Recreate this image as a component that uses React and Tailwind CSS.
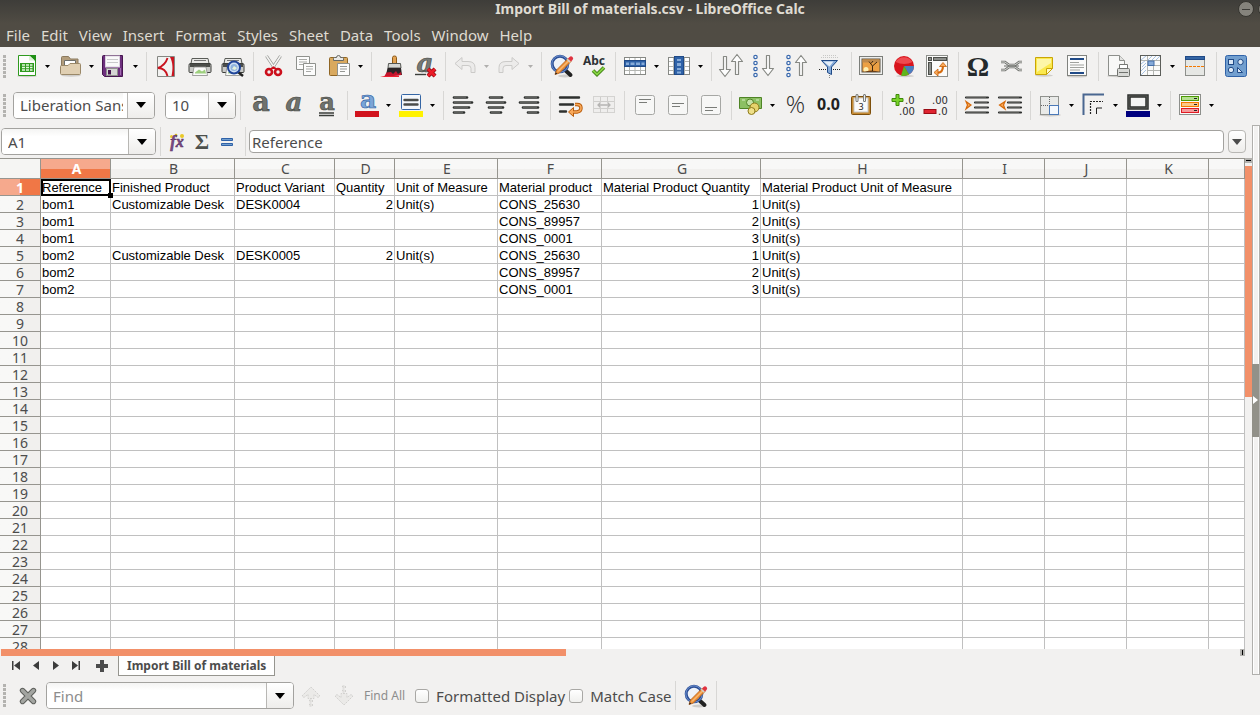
import { useState } from "react";

const MENUS = [
  "File", "Edit", "View", "Insert", "Format", "Styles",
  "Sheet", "Data", "Tools", "Window", "Help",
];

const COLUMNS = [
  { id: "A", width: "w-[70px]" },
  { id: "B", width: "w-[124px]" },
  { id: "C", width: "w-[100px]" },
  { id: "D", width: "w-[60px]" },
  { id: "E", width: "w-[103px]" },
  { id: "F", width: "w-[104px]" },
  { id: "G", width: "w-[159px]" },
  { id: "H", width: "w-[202px]" },
  { id: "I", width: "w-[82px]" },
  { id: "J", width: "w-[82px]" },
  { id: "K", width: "w-[82px]" },
  { id: "", width: "" },
];

const DATA = [
  ["Reference", "Finished Product", "Product Variant", "Quantity", "Unit of Measure", "Material product", "Material Product Quantity", "Material Product Unit of Measure"],
  ["bom1", "Customizable Desk", "DESK0004", 2, "Unit(s)", "CONS_25630", 1, "Unit(s)"],
  ["bom1", "", "", "", "", "CONS_89957", 2, "Unit(s)"],
  ["bom1", "", "", "", "", "CONS_0001", 3, "Unit(s)"],
  ["bom2", "Customizable Desk", "DESK0005", 2, "Unit(s)", "CONS_25630", 1, "Unit(s)"],
  ["bom2", "", "", "", "", "CONS_89957", 2, "Unit(s)"],
  ["bom2", "", "", "", "", "CONS_0001", 3, "Unit(s)"],
];

const ROW_COUNT = 28;

/* ---------- icon drawings, all on a 24x24 box ---------- */

const Lens = () => (
  <>
    <ellipse cx="15" cy="22" rx="7" ry="1.500" fill="#cfcdca" />
    <path d="M15 16l5.500 5" stroke="#222" strokeWidth="4" strokeLinecap="round" />
    <circle cx="10" cy="10" r="7.800" fill="#eef2f8" stroke="#2c4f96" strokeWidth="3" />
    <circle cx="10" cy="10" r="8.200" fill="none" stroke="#6f92d0" strokeWidth="1" />
    <path d="M5 20.500l1.500-4.500L18 4.500l3 3L9.500 19z" fill="#f0933a" stroke="#b35a10" strokeWidth=".8" />
    <path d="M8 17.500L19.500 6" stroke="#fcd39b" strokeWidth="1" />
    <path d="M18 4.500L19.500 3a2 2 0 013 3L21 7.500z" fill="#e0323f" />
    <path d="M17.200 5.300l3 3" stroke="#d0d0d0" strokeWidth="1.400" />
    <path d="M5 20.500l.8-2.300 1.500 1.500z" fill="#222" />
  </>
);

const Printer = () => (
  <>
    <path d="M4 4.500h16l1 5H3z" fill="#e9e9e7" stroke="#5a5c58" />
    <path d="M6 6.500h12" stroke="#777" />
    <path d="M2 9.500q-1 0-1 2v6q0 1 1 1h20q1 0 1-1v-6q0-2-1-2z" fill="#c9cac7" stroke="#3c3e3b" />
    <rect x="2" y="10" width="20" height="3" fill="#4b4d4a" />
    <path d="M6 13h12l1.500 8.500h-15z" fill="#fafafa" stroke="#8a8c88" strokeWidth=".8" />
    <path d="M7 18.500l4-3 3 2 3-2 1 4H7z" fill="#9ed07e" />
  </>
);

const Letter = ({ italic, size = 27, y = 18, color = "#6f726d", edge = "#434642", children }) => (
  <>
    <text
      x="12" y={y} textAnchor="middle" fontSize={size} fontWeight="bold"
      fontStyle={italic ? "italic" : "normal"} fontFamily="DejaVu Serif, serif"
      fill={color} stroke={edge} strokeWidth=".6"
    >
      a
    </text>
    {children}
  </>
);

const Bars = ({ rows }) => rows.map(([x1, x2], i) => (
  <g key={i}>
    <path d={`M${x1} ${4.5 + i * 5}H${x2}`} stroke="#2e302e" strokeWidth="2.600" strokeLinecap="round" />
    <path d={`M${x1} ${4.2 + i * 5}H${x2 - 1}`} stroke="#858783" strokeWidth=".8" />
  </g>
));

const TableIcon = ({ vertical }) => (
  <>
    <rect x="0.500" y="3.500" width="21" height="17" fill="#fff" stroke="#868884" />
    <path d="M5.500 4v16M11 4v16M16.500 4v16M1 7.500h20M1 12.500h20M1 16.500h20" stroke="#b4b6b2" />
    {vertical ? (
      <>
        <rect x="6.500" y="2.500" width="9" height="18" fill="#2f62a8" stroke="#204a87" />
        <path d="M9 5h4v2H9zM9 9h4v3H9zM9 14h4v2H9zM9 17.500h4v2H9z" fill="#86abd9" />
      </>
    ) : (
      <>
        <rect x="0.500" y="6.500" width="21" height="6" fill="#2f62a8" stroke="#204a87" />
        <path d="M2 8.500h3v2.500H2zM6.500 8.500h4v2.500h-4zM12 8.500h4v2.500h-4zM17.500 8.500h3v2.500h-3z" fill="#86abd9" />
      </>
    )}
  </>
);

const ArrowV = ({ x, up, y = 1 }) => (
  <path
    d="M4.500 .5h3v13h4L6 20.500.500 13.500h4z"
    transform={up ? `translate(${x} ${y + 21}) scale(1 -1)` : `translate(${x} ${y})`}
    fill="#fdfdfd" stroke="#878984" strokeWidth="1.200" strokeLinejoin="round"
  />
);

const Dots = () => [3, 9, 15, 21].map((y) => (
  <circle key={y} cx="2.500" cy={y} r="1.700" fill="#fff" stroke="#3a69ad" strokeWidth="1.200" />
));

const VAlign = ({ y }) => (
  <>
    <rect x="2.500" y="2.500" width="19" height="19" rx="2" fill="#f7f7f6" stroke="#a6a7a4" />
    <path d={`M6 ${y}h12M6 ${y + 3}h8`} stroke="#7b7d79" strokeWidth="1.200" />
  </>
);

const Num = ({ x, y, children }) => (
  <text x={x} y={y} fontSize="10" fontFamily="DejaVu Sans, sans-serif" fill="#2c2c2c">{children}</text>
);

const Indent = ({ children }) => (
  <>
    <path d="M1 4.500h22M10 9.500h13M10 14.500h13M1 19.500h22" stroke="#2e302e" strokeWidth="2.200" strokeLinecap="round" />
    <path d="M1 4.200h20M10 9.200h12M10 14.200h12M1 19.200h20" stroke="#858783" strokeWidth=".7" />
    {children}
  </>
);

const ICONS = {
  newDoc: (
    <>
      <ellipse cx="12" cy="22" rx="10" ry="1.200" fill="#cfcdca" />
      <path d="M3.500 1.500h12l5 5v15h-17z" fill="#fdfdfd" stroke="#2f9a1f" />
      <path d="M14 1h7v7z" fill="#1f8f14" />
      <path d="M14 1.500v5h6z" fill="#d9f0d2" />
      <rect x="5" y="9" width="14" height="9" fill="#2f9a1f" />
      <path d="M7 11h3M11 11h3M15 11h2.500M7 13.500h3M11 13.500h3M15 13.500h2.500M7 16h3M11 16h3M15 16h2.500" stroke="#e4f7de" strokeWidth="1.400" />
    </>
  ),
  open: (
    <>
      <ellipse cx="12" cy="21.500" rx="10" ry="1.200" fill="#cfcdca" />
      <path d="M2.500 20V3.500q0-1 1-1h6l2 2.500h7.500v6" fill="#b39d7c" stroke="#8b7a5e" />
      <path d="M5.500 11V6.500h11V11" fill="#fff" stroke="#6c6e6a" />
      <path d="M1.500 12.500q0-1 1-1H9l2-2h9.500q1 0 1 1v9q0 1-1 1h-18q-1 0-1-1z" fill="#e0cfb2" stroke="#9a8868" />
    </>
  ),
  save: (
    <>
      <path d="M-.5 2.500q0-1 1-1h19v21h-18l-2-2z" fill="#6d2f7d" stroke="#46154f" />
      <rect x="2.500" y="2" width="14" height="11" fill="#fafafa" stroke="#d9d0dd" />
      <path d="M4 5.500h11M4 8.500h11" stroke="#c9c9cb" />
      <rect x="3.500" y="14.500" width="11" height="7" fill="#d6d6d4" stroke="#8e8f8c" />
      <rect x="5" y="16" width="3" height="4.500" fill="#46154f" />
      <path d="M17.500 14v7" stroke="#a36bb1" />
    </>
  ),
  pdf: (
    <>
      <path d="M2.500 2.500h17v20h-17z" fill="#f2f2f1" stroke="#858682" />
      <path d="M15 3h4v19h-2.500C18 15 18 9 15 3z" fill="#c9141f" />
      <path d="M12.500 4C11 9 8 12 3 14c5 0 8 2 9.500 8" fill="none" stroke="#c9141f" strokeWidth="1.900" />
    </>
  ),
  print: <Printer />,
  preview: (
    <>
      <Printer />
      <path d="M17 18l5 4" stroke="#222" strokeWidth="2.500" />
      <circle cx="13" cy="13.500" r="6" fill="#cfe0f3" stroke="#20459a" strokeWidth="2" />
      <circle cx="13" cy="13.500" r="3.500" fill="#8fb3df" />
      <path d="M11 15l2-3 3 2-2 2z" fill="#e5f2dc" />
    </>
  ),
  cut: (
    <>
      <path d="M4.500 2l8 12M18.500 2l-8 12" stroke="#8c8e8a" strokeWidth="3" />
      <path d="M4.500 2l8 12M18.500 2l-8 12" stroke="#f4f4f3" strokeWidth="1.600" />
      <ellipse cx="7" cy="18" rx="3" ry="3" fill="none" stroke="#cc0f1c" strokeWidth="2.600" />
      <ellipse cx="16" cy="18" rx="3" ry="3" fill="none" stroke="#cc0f1c" strokeWidth="2.600" />
      <path d="M9 15l2.500-1.500L14 15" fill="none" stroke="#cc0f1c" strokeWidth="2" />
    </>
  ),
  copy: (
    <>
      <path d="M1.500 2.500h13v13h-13z" fill="#fcfcfc" stroke="#8f918d" />
      <path d="M4 5.500h8M4 8h8M4 10.500h5" stroke="#a9aaa7" />
      <path d="M8.500 9.500h12v12h-12z" fill="#fcfcfc" stroke="#8f918d" />
      <path d="M11 12.500h7M11 15h7M11 17.500h5" stroke="#a9aaa7" />
    </>
  ),
  paste: (
    <>
      <rect x="1.500" y="3.500" width="18" height="18" rx="1" fill="#d9a95f" stroke="#8f6524" />
      <path d="M5.500 6.500v-2q0-1 1-1h2q0-2 2-2t2 2h2q1 0 1 1v2z" fill="#e8e8e6" stroke="#666864" />
      <path d="M9.500 9.500h12v12h-12z" fill="#fcfcfc" stroke="#8f918d" />
      <path d="M12 12.500h7M12 15h7M12 17.500h5" stroke="#969894" />
    </>
  ),
  brush: (
    <>
      <path d="M0 23q7-2.500 19-1.500V23z" fill="#ef2030" />
      <path d="M12.500 10V3.500q0-1.500 2-1.500t2 1.500V10z" fill="#e2a354" stroke="#8f5a15" />
      <path d="M8.500 9.500h12l.5 4.500H8z" fill="#d5d6d3" stroke="#555753" />
      <path d="M7.500 14h13.500l1 7H6z" fill="#2a2426" />
      <path d="M6.500 18.500l-2 3.500h9l8-1-.5-3-3 2-2-3-3 3-2-2z" fill="#c4142c" />
    </>
  ),
  clearFmt: (
    <>
      <Letter italic size={26} y={18} color="#777975" />
      <path d="M2 20.500h11" stroke="#3b3e3a" strokeWidth="1.400" />
      <path d="M15 15l7 7M22 15l-7 7" stroke="#8f0b13" strokeWidth="4.200" />
      <path d="M15 15l7 7M22 15l-7 7" stroke="#ec1c28" strokeWidth="2.600" />
    </>
  ),
  undo: (
    <path d="M1 9.500l7-6v4h6q7 0 7 6v5h-4v-4q0-3-3-3H8v4z" fill="#ecebea" stroke="#cbcac8" strokeLinejoin="round" />
  ),
  redo: (
    <path d="M21 9.500l-7-6v4H8q-7 0-7 6v5h4v-4q0-3 3-3h6v4z" fill="#ecebea" stroke="#cbcac8" strokeLinejoin="round" />
  ),
  find: <Lens />,
  spell: (
    <>
      <text x="11" y="11" textAnchor="middle" fontSize="12" fontWeight="bold" fontFamily="Noto Sans, sans-serif" fill="#2d3136">Abc</text>
      <path d="M10 16.500l4 4 7-7" fill="none" stroke="#3b7d10" strokeWidth="3.600" />
      <path d="M10 16.500l4 4 7-7" fill="none" stroke="#86d243" strokeWidth="1.800" />
    </>
  ),
  row: <TableIcon />,
  col: <TableIcon vertical />,
  sort: (
    <>
      <ArrowV x={-1} y={2} />
      <ArrowV x={11} y={0} up />
    </>
  ),
  sortAsc: (
    <>
      <Dots />
      <ArrowV x={9} />
    </>
  ),
  sortDesc: (
    <>
      <Dots />
      <ArrowV x={9} up />
    </>
  ),
  filter: (
    <>
      <path d="M4 1.500h14M2 3.500h18" stroke="#c8c8c6" strokeDasharray="1 1" />
      <path d="M0 15.500h22" stroke="#222" strokeDasharray="1 1" />
      <path d="M2.500 6.500h16l-6 6.500v7.500l-4-2V13z" fill="#86abd9" stroke="#204a87" />
      <path d="M4.500 7.500h10l-4 5z" fill="#e4edf7" />
      <path d="M10.500 21v3" stroke="#888" strokeDasharray="1 1" />
    </>
  ),
  image: (
    <>
      <rect x="-.5" y="2.500" width="23" height="18" fill="#eeeeec" stroke="#7c7e7a" />
      <rect x="2" y="5" width="18" height="13" fill="#eca044" stroke="#5c5446" />
      <rect x="2.500" y="5.500" width="17" height="3" fill="#c08a4c" />
      <circle cx="6" cy="15.500" r="2.500" fill="#ffeeb0" />
      <path d="M3 18q9-3 16 0z" fill="#6b4018" />
      <path d="M12.500 17v-5L9 7.500M12.500 12L17 8M11 9.500l2-2.500" fill="none" stroke="#3f2810" strokeWidth="1" />
    </>
  ),
  chart: (
    <>
      <ellipse cx="12" cy="22" rx="9" ry="1.200" fill="#cfcdca" />
      <circle cx="11" cy="12" r="10" fill="#d8141c" />
      <path d="M2.500 8a10 10 0 0117 0q-8 4-17 0z" fill="#ee4a50" />
      <path d="M11 12h10a10 10 0 01-5 8.600z" fill="#4a7ebf" />
      <path d="M11 12l5 8.600a10 10 0 01-8 .8z" fill="#5fb41c" />
    </>
  ),
  pivot: (
    <>
      <rect x=".5" y="1.500" width="21" height="21" fill="#fbfbfa" stroke="#8d8f8b" />
      <rect x="2.500" y="3.500" width="3" height="3" fill="#8d8f8b" stroke="#4c4e4a" />
      <rect x="7.500" y="3.500" width="13" height="3" fill="#8d8f8b" stroke="#4c4e4a" />
      <rect x="2.500" y="8.500" width="3" height="12" fill="#8d8f8b" stroke="#4c4e4a" />
      <path d="M11 18.500q6 1 6-7" fill="none" stroke="#d66a0b" strokeWidth="2.200" />
      <path d="M13.500 12.500L17 8.500l3.500 4zM12 15l-4 3.500 4 3.500z" fill="#f9a95a" stroke="#c4600a" strokeWidth=".8" />
    </>
  ),
  omega: (
    <text x="11" y="22" textAnchor="middle" fontSize="28" fontWeight="bold" fontFamily="Liberation Serif, serif" fill="#24292b">Ω</text>
  ),
  link: (
    <>
      <path d="M1 8h4l4 3h6l4-3h3M1 16h4l4-3h6l4 3h3" fill="none" stroke="#6c6e6a" strokeWidth="2.600" />
      <path d="M1 8h4l4 3h6l4-3h3M1 16h4l4-3h6l4 3h3" fill="none" stroke="#dcddda" strokeWidth="1" />
      <path d="M4 12h15" stroke="#6c6e6a" />
    </>
  ),
  note: (
    <>
      <ellipse cx="11" cy="21.500" rx="9" ry="1.200" fill="#cfcdca" />
      <path d="M2.500 3.500h17v11l-6 6h-11z" fill="#fbe94e" stroke="#c9a506" />
      <path d="M4 5h14v4L4 18z" fill="#fdf6a8" />
      <path d="M13.500 20.500v-6h6z" fill="#fff9c4" stroke="#c9a506" />
    </>
  ),
  header: (
    <>
      <ellipse cx="11" cy="22.500" rx="10" ry="1" fill="#cfcdca" />
      <rect x="1.500" y="1.500" width="19" height="20" fill="#fbfbfa" stroke="#80827e" />
      <path d="M4 5h14M4 19h14" stroke="#204a87" strokeWidth="2" />
      <path d="M4 8.500h9M4 11h14M4 13.500h14M4 16h10" stroke="#a0a29e" />
    </>
  ),
  printArea: (
    <>
      <ellipse cx="10" cy="22" rx="10" ry="1.200" fill="#cfcdca" />
      <path d="M1.500 1.500h11l5 5v15h-16z" fill="#f8f8f7" stroke="#8d8f8b" />
      <path d="M12.500 1.500v5h5" fill="#e2e2e0" stroke="#8d8f8b" />
      <path d="M12.500 15v-4.500h8V15" fill="#fff" stroke="#767874" />
      <rect x="10.500" y="14.500" width="12" height="8" rx="1" fill="#d8d9d6" stroke="#70726e" />
      <path d="M12 18.500h9" stroke="#70726e" />
    </>
  ),
  freeze: (
    <>
      <rect x=".5" y="1.500" width="20" height="20" fill="#fbfbfa" stroke="#5c5e5a" />
      <path d="M1 6l5-4M1 10l5-4M2 13l4-4M1 17l5-5M1 21l5-5M8 6l4-4M12 6l4-4M16 6l4-4" stroke="#a9c3e4" />
      <path d="M7.500 2v19M13.500 6v15M1 6.500h19M7 11.500h13M7 16.500h13" stroke="#b3b5b1" />
      <rect x="8" y="7" width="6" height="4.500" fill="#86abd9" stroke="#456fa8" />
    </>
  ),
  split: (
    <>
      <rect x="1.500" y="2.500" width="19" height="19" fill="#e6e7e4" stroke="#8d8f8b" />
      <rect x="1.500" y="2.500" width="19" height="3" fill="#3465a4" stroke="#204a87" />
      <path d="M1 12.500h20" stroke="#f57900" strokeWidth="1.200" strokeDasharray="3 1" />
    </>
  ),
  shapes: (
    <>
      <rect x=".5" y="1.500" width="21" height="21" rx="2" fill="#729fcf" stroke="#2f62a8" />
      <g fill="#dbe8f6" stroke="#204a87">
        <rect x="3.500" y="5.500" width="5" height="5" />
        <circle cx="15.500" cy="8" r="2.700" />
        <circle cx="6" cy="16" r="2.700" />
        <path d="M12.500 13.500v5h5z" />
      </g>
    </>
  ),
  bold: <Letter />,
  italic: <Letter italic size={26} />,
  underline: (
    <Letter size={24} y={17}>
      <path d="M4 20h15M4 22.500h15" stroke="#3b3e3a" strokeWidth="1.300" />
    </Letter>
  ),
  fontColor: (
    <>
      <Letter size={25} y={15} color="#7ba5d8" edge="#2a5a9e" />
      <rect x="-1" y="18" width="24" height="6" fill="#d1131d" />
    </>
  ),
  highlight: (
    <>
      <rect x="1.500" y="1.500" width="19" height="15" rx="1" fill="#f4f7fb" stroke="#3465a4" />
      <path d="M4.500 7h13M4.500 11.500h13" stroke="#4a4c49" strokeWidth="2.400" strokeLinecap="round" />
      <rect x="-1" y="18" width="24" height="6" fill="#fff200" />
    </>
  ),
  left: <Bars rows={[[2, 15], [2, 20], [2, 17], [2, 12]]} />,
  center: <Bars rows={[[5, 17], [2, 20], [4, 18], [6, 16]]} />,
  right: <Bars rows={[[7, 20], [2, 20], [5, 20], [10, 20]]} />,
  wrap: (
    <>
      <path d="M1 4.500h19M1 11.500h13M1 18.500h6" stroke="#2e302e" strokeWidth="2.400" strokeLinecap="round" />
      <path d="M16 11.500h2q4 0 4 3.500t-4 4h-5" fill="none" stroke="#b85a08" strokeWidth="3.400" />
      <path d="M14.500 14.500L9.500 19l5 4.500z" fill="#f9a95a" stroke="#b85a08" />
      <path d="M16 11.500h2q4 0 4 3.500t-4 4h-5" fill="none" stroke="#f9a95a" strokeWidth="1.600" />
    </>
  ),
  merge: (
    <>
      <rect x="1.500" y="3.500" width="21" height="16" fill="#efeeed" stroke="#d4d3d1" />
      <path d="M8.500 4v4M15.500 4v4M2 8.500h20M2 15.500h20M8.500 16v4M15.500 16v4" stroke="#cfcecc" />
      <path d="M6 12h12M8.500 9.500L6 12l2.500 2.500M15.500 9.500L18 12l-2.500 2.500" fill="none" stroke="#b5b4b2" strokeWidth="1.300" />
    </>
  ),
  top: <VAlign y={6.5} />,
  middle: <VAlign y={10.5} />,
  bottom: <VAlign y={14.5} />,
  currency: (
    <>
      <path d="M-.5 4.500h22v11h-22z" fill="#8cc063" stroke="#4f8426" />
      <circle cx="10" cy="9.500" r="3.500" fill="#c4e3a7" stroke="#4f8426" />
      <path d="M2 7h3M16 7h3" stroke="#d9efc6" />
      <circle cx="14.500" cy="14.500" r="4.500" fill="#e6d36c" stroke="#8d7a1a" />
      <circle cx="11.500" cy="18" r="3.500" fill="#efe08a" stroke="#8d7a1a" />
    </>
  ),
  percent: (
    <text x="11.500" y="20" textAnchor="middle" fontSize="24" fontFamily="Open Sans, sans-serif" fontWeight="300" fill="#2c2c2c">%</text>
  ),
  number: (
    <text x="11.500" y="17" textAnchor="middle" fontSize="16" fontWeight="bold" fontFamily="Noto Sans, sans-serif" fill="#1f1f1f">0.0</text>
  ),
  date: (
    <>
      <rect x="1.500" y="3.500" width="19" height="18" rx="1" fill="#c58a33" stroke="#7d4f0c" />
      <rect x="4" y="5" width="14" height="14" fill="#fafafa" stroke="#c9c9c7" />
      <path d="M7 2.500v5M14.500 2.500v5" stroke="#6f716d" strokeWidth="3" strokeLinecap="round" />
      <path d="M7 2.500v5M14.500 2.500v5" stroke="#f0f0ee" strokeWidth="1.200" strokeLinecap="round" />
      <text x="11" y="17" textAnchor="middle" fontSize="9" fontFamily="Noto Sans, sans-serif" fill="#222">3</text>
    </>
  ),
  addDec: (
    <>
      <path d="M5 1.500h3v4h4v3H8v4H5v-4H1v-3h4z" fill="#79d32b" stroke="#3f8a08" />
      <Num x={14} y={11}>.0</Num>
      <Num x={8} y={22}>.00</Num>
    </>
  ),
  delDec: (
    <>
      <rect x="0" y="16.500" width="12" height="4" fill="#e02430" stroke="#9a0c14" />
      <Num x={8} y={11}>.00</Num>
      <Num x={14} y={22}>.0</Num>
    </>
  ),
  indent: (
    <Indent>
      <path d="M1 8.500l5 3.500-5 4 1.500-4z" fill="#f9a95a" stroke="#d66a0b" strokeWidth="1.200" />
    </Indent>
  ),
  outdent: (
    <Indent>
      <path d="M7 8.500L1.500 12 7 16l-1.500-4z" fill="#f9a95a" stroke="#d66a0b" strokeWidth="1.200" />
    </Indent>
  ),
  borders: (
    <>
      <ellipse cx="11" cy="22" rx="11" ry="1.500" fill="#cfcdca" />
      <rect x="1.500" y="3.500" width="18" height="18" fill="#e9eae8" stroke="#90928e" />
      <path d="M10.500 4v8M2 12.500h8" stroke="#666" strokeDasharray="1 1" />
      <rect x="10.500" y="12.500" width="9" height="9" fill="#f4f8fd" stroke="#4a78b8" />
    </>
  ),
  borderStyle: (
    <>
      <path d="M.5 22V1.500H21" fill="none" stroke="#2d4f80" strokeWidth="2" opacity=".85" />
      <path d="M7.500 21V8.500H20" fill="none" stroke="#222" strokeWidth="1.200" strokeDasharray="2 1" />
      <path d="M13.500 21v-6H19" fill="none" stroke="#222" />
    </>
  ),
  borderColor: (
    <>
      <rect x="2" y="3" width="18" height="12" fill="#f4f4f3" stroke="#2a2c2a" strokeWidth="3.500" />
      <rect x="2" y="3" width="18" height="12" fill="none" stroke="#5c5e5a" strokeWidth="1" />
      <rect x="-1" y="18" width="24" height="6" fill="#00007f" />
    </>
  ),
  conditional: (
    <>
      <rect x=".5" y="1.500" width="21" height="20" fill="#fafafa" stroke="#8d8f8b" />
      <rect x="2.500" y="3.500" width="17" height="4" fill="#b4e08f" stroke="#4e9a06" />
      <rect x="2.500" y="9.500" width="17" height="4" fill="#fcc98a" stroke="#f57900" />
      <rect x="2.500" y="15.500" width="17" height="4" fill="#f59a9a" stroke="#e01b24" />
      <path d="M15 5.500h3M15 11.500h3M15 17.500h3" stroke="#222" strokeWidth="1.200" />
    </>
  ),
  fx: (
    <>
      <g fill="#e9c826">
        <circle cx="6.500" cy="6.500" r="1.500" />
        <circle cx="11" cy="5" r="1.300" />
        <circle cx="17" cy="6" r="2" />
      </g>
      <text x="12" y="17" textAnchor="middle" fontSize="16" fontWeight="bold" fontStyle="italic" fontFamily="Liberation Serif, serif" fill="#7b4b86" stroke="#57305f" strokeWidth=".5">fx</text>
    </>
  ),
  sum: (
    <text x="12" y="19" textAnchor="middle" fontSize="22" fontWeight="bold" fontFamily="Liberation Serif, serif" fill="#4d504c">Σ</text>
  ),
  equals: (
    <path d="M6.500 8.500h11v2h-11zM6.500 13.500h11v2h-11z" fill="#729fcf" stroke="#2f62a8" />
  ),
  close: (
    <>
      <path d="M6.500 6.500l11 11M17.500 6.500l-11 11" stroke="#5c5e5a" strokeWidth="5.400" strokeLinecap="round" />
      <path d="M6.500 6.500l11 11M17.500 6.500l-11 11" stroke="#a3a5a1" strokeWidth="3.400" strokeLinecap="round" />
    </>
  ),
  prev: (
    <path d="M3 12l9-9 9 9-2 1.500-4-3v4H9v-4l-4 3zM10.500 16h3v2h-3zM10.500 20h3v2h-3z" fill="#ebeae8" stroke="#d2d1cf" strokeDasharray="2 1" />
  ),
  next: (
    <path d="M3 12l9 9 9-9-2-1.500-4 3v-4H9v4l-4-3zM10.500 6h3v2h-3zM10.500 2h3v2h-3z" fill="#ebeae8" stroke="#d2d1cf" strokeDasharray="2 1" />
  ),
};

const Icon = ({ name }) => (
  <svg viewBox="0 0 24 24" fill="none" className="w-6 h-6 shrink-0 overflow-visible" aria-hidden="true">
    {ICONS[name]}
  </svg>
);

const Caret = ({ small = false, className = "text-black" }) => (
  <svg
    viewBox="0 0 10 6"
    className={`${small ? "w-[5px] h-[3px]" : "w-[10px] h-1.5"} ${className}`}
    aria-hidden="true"
  >
    <path d="M0 0h10L5 6z" fill="currentColor" />
  </svg>
);

/* ---------- toolbars ---------- */

const FILE_TOOLS = [
  ["newDoc", "New", "menu"], ["open", "Open", "menu"], ["save", "Save", "menu"], null,
  ["pdf", "Export as PDF"], ["print", "Print"], ["preview", "Print Preview"], null,
  ["cut", "Cut"], ["copy", "Copy"], ["paste", "Paste", "menu"], null,
  ["brush", "Clone Formatting"], ["clearFmt", "Clear Formatting"], null,
  ["undo", "Undo", "off"], ["redo", "Redo", "off"], null,
  ["find", "Find & Replace"], ["spell", "Spelling"], null,
  ["row", "Row", "menu"], ["col", "Column", "menu"], null,
  ["sort", "Sort"], ["sortAsc", "Sort Ascending"], ["sortDesc", "Sort Descending"], ["filter", "AutoFilter"], null,
  ["image", "Insert Image"], ["chart", "Insert Chart"], ["pivot", "Pivot Table"], null,
  ["omega", "Special Character"], ["link", "Hyperlink"], ["note", "Comment"], ["header", "Headers and Footers"], null,
  ["printArea", "Define Print Area"], ["freeze", "Freeze Rows and Columns", "menu"], ["split", "Split Window"], null,
  ["shapes", "Show Draw Functions"],
];

const FORMAT_TOOLS = [
  null,
  ["bold", "Bold"], ["italic", "Italic"], ["underline", "Underline"], null,
  ["fontColor", "Font Color", "menu"], ["highlight", "Highlighting", "menu"], null,
  ["left", "Align Left"], ["center", "Center"], ["right", "Align Right"], null,
  ["wrap", "Wrap Text"], ["merge", "Merge Cells"], null,
  ["top", "Align Top"], ["middle", "Center Vertically"], ["bottom", "Align Bottom"], null,
  ["currency", "Currency", "menu"], ["percent", "Percent"], ["number", "Number"], ["date", "Date"], null,
  ["addDec", "Add Decimal Place"], ["delDec", "Delete Decimal Place"], null,
  ["indent", "Increase Indent"], ["outdent", "Decrease Indent"], null,
  ["borders", "Borders", "menu"], ["borderStyle", "Border Style", "menu"], ["borderColor", "Border Color", "menu"], null,
  ["conditional", "Conditional Formatting", "menu"],
];

const Separator = () => (
  <div className="w-2 shrink-0 flex justify-center">
    <div className="w-px h-[29px] bg-[#d8d7d5]" />
  </div>
);

const Grip = () => (
  <div className="w-[10px] shrink-0 pl-[3px] flex flex-col gap-px">
    {[0, 1, 2, 3, 4, 5].map((i) => (
      <span key={i} className="w-[3px] h-[3px] bg-[#b4b3b0]" />
    ))}
  </div>
);

const Tools = ({ items }) => items.map((item, i) => {
  if (!item) return <Separator key={i} />;
  const [name, label, kind] = item;
  return (
    <div key={name} className="flex items-center shrink-0">
      <button type="button" aria-label={label} disabled={kind === "off"} className="w-[33px] h-8 pl-[5px] flex items-center">
        <Icon name={name} />
      </button>
      {kind && (
        <button type="button" aria-label={`${label} options`} disabled={kind === "off"} className="w-[11px] h-8 pl-0.5 flex items-center">
          <Caret small className={kind === "off" ? "text-[#b0afad]" : "text-black"} />
        </button>
      )}
    </div>
  );
});

const Combo = ({ label, value, onChange, placeholder, className = "", inputClass = "" }) => (
  <div className={`flex h-[27px] shrink-0 rounded-[4px] border border-[#a3a29f] bg-white overflow-hidden ${className}`}>
    <input
      type="text"
      aria-label={label}
      value={value}
      placeholder={placeholder}
      onChange={onChange}
      className={`flex-1 min-w-0 bg-linear-to-b from-[#f4f4f3] to-white to-30% outline-none text-[#4c4c4c] placeholder:text-[#8d8d8d] ${inputClass}`}
    />
    <button
      type="button"
      aria-label={`${label} list`}
      className="w-[27px] shrink-0 flex items-center justify-center border-l border-[#b8b7b4] bg-linear-to-b from-white to-[#eeedeb]"
    >
      <Caret />
    </button>
  </div>
);

const Check = ({ id, label }) => (
  <div className="flex items-center gap-[7px]">
    <input
      id={id}
      type="checkbox"
      className="appearance-none w-[14px] h-[14px] rounded-[3px] border border-[#a9a8a5] bg-linear-to-b from-white to-[#f0f0ee] checked:bg-[#f07746]"
    />
    <label htmlFor={id}>{label}</label>
  </div>
);

/* ---------- sheet ---------- */

const Sheet = () => (
  <table className="w-full table-fixed border-separate border-spacing-0 bg-white text-black">
    <colgroup>
      <col className="w-[41px]" />
      {COLUMNS.map((c) => <col key={c.id} className={c.width} />)}
    </colgroup>
    <thead>
      <tr className="h-[21px] text-[14px] leading-[18px] text-[#4c4c4c]">
        <td className="p-0 border-y border-r border-[#96958f] bg-[#f5f5f3]" />
        {COLUMNS.map((c, i) => (
          <th
            key={c.id}
            scope="col"
            className={`p-0 pl-0.5 border-y border-r border-[#96958f] text-center ${i === 0
              ? "font-bold text-white bg-linear-to-b from-[#f6a98d] from-50% to-[#f07746] to-50%"
              : "font-normal bg-linear-to-b from-[#f8f8f7] from-50% to-[#f1f0ee] to-50%"}`}
          >
            {c.id}
          </th>
        ))}
      </tr>
    </thead>
    <tbody>
      {Array.from({ length: ROW_COUNT }, (_, r) => (
        <tr key={r} className="h-[17px]">
          <th
            scope="row"
            className={`p-0 pt-0.5 border-b border-r border-[#96958f] text-center text-[14px] leading-[14px] ${r === 0
              ? "font-bold text-white bg-linear-to-r from-[#f6a98d] from-50% to-[#f07746] to-50%"
              : "font-normal text-[#4c4c4c] bg-linear-to-r from-[#f8f8f7] from-50% to-[#f1f0ee] to-50%"}`}
          >
            {r + 1}
          </th>
          {COLUMNS.map((c, i) => {
            const value = DATA[r]?.[i] ?? "";
            const active = r === 0 && i === 0;
            return (
              <td
                key={c.id}
                className={`p-0 px-px pt-0.5 border-b border-r border-[#c0c0c0] font-['Liberation_Sans',Arial,sans-serif] text-[13px] leading-[14px] whitespace-nowrap ${typeof value === "number" ? "text-right" : ""} ${active ? "relative" : ""}`}
              >
                {value}
                {active && (
                  <>
                    <span className="absolute inset-0 -right-px -bottom-px border-2 border-black" />
                    <span className="absolute -right-[3px] -bottom-[3px] w-[5px] h-[5px] bg-black" />
                  </>
                )}
              </td>
            );
          })}
        </tr>
      ))}
    </tbody>
  </table>
);

const TAB_NAV = [
  ["First sheet", "M0 0h1.500v9H0zM8 0v9L2 4.500z"],
  ["Previous sheet", "M7 0v9L1 4.500z"],
  ["Next sheet", "M1 0v9l6-4.500z"],
  ["Last sheet", "M0 0v9l6-4.500zM6.500 0H8v9H6.500z"],
];

export default function App() {
  const [font, setFont] = useState("Liberation Sans");
  const [size, setSize] = useState("10");
  const [cell, setCell] = useState("A1");
  const [content, setContent] = useState("Reference");
  const [search, setSearch] = useState("");

  return (
    <div className="h-screen flex flex-col overflow-hidden bg-[#f2f1f0] text-[#4c4c4c] text-[15px] leading-5 font-['Noto_Sans','Open_Sans',sans-serif]">
      <header className="shrink-0 bg-linear-to-b from-[#3e3d39] to-[#504c44] to-50% text-[#dfdbd2]">
        <div className="relative h-[19px] pl-10 flex items-center justify-center overflow-hidden">
          <h1 className="font-bold text-[14px] leading-5 pb-0.5">Import Bill of materials.csv - LibreOffice Calc</h1>
          <div className="absolute left-full top-px -ml-[22px] flex gap-1">
            <button type="button" aria-label="Minimize" className="w-4 h-4 shrink-0 rounded-full bg-[#85837c] border border-[#35342f] flex items-center justify-center">
              <span className="w-2 h-px bg-[#3c3b37]" />
            </button>
            <button type="button" aria-label="Maximize" className="w-4 h-4 shrink-0 rounded-full bg-[#85837c] border border-[#35342f]" />
          </div>
        </div>
        <nav className="flex h-7 items-center gap-[11px] px-1.5 pb-1 pt-2">
          {MENUS.map((m) => (
            <button key={m} type="button">{m}</button>
          ))}
        </nav>
      </header>

      <div role="toolbar" aria-label="Standard" className="flex items-center h-[38px] shrink-0 overflow-hidden">
        <Grip />
        <Tools items={FILE_TOOLS} />
      </div>

      <div role="toolbar" aria-label="Formatting" className="flex items-center h-10 shrink-0 overflow-hidden">
        <Grip />
        <Combo label="Font name" value={font} onChange={(e) => setFont(e.target.value)} className="w-[142px] ml-[3px]" inputClass="pl-1.5 mr-1" />
        <Combo label="Font size" value={size} onChange={(e) => setSize(e.target.value)} className="w-[71px] ml-[10px]" inputClass="pl-1.5" />
        <Tools items={FORMAT_TOOLS} />
      </div>

      <div className="flex flex-1 min-h-0">
        <div className="flex flex-col flex-1 min-w-0">
          <div className="flex items-center h-[33px] shrink-0 pl-px pr-1.5">
            <Combo label="Name box" value={cell} onChange={(e) => setCell(e.target.value)} className="w-[155px]" inputClass="pl-1.5" />
            <Separator />
            <div className="flex items-center gap-px pl-px pr-0.5">
              <button type="button" aria-label="Function Wizard"><Icon name="fx" /></button>
              <button type="button" aria-label="Sum"><Icon name="sum" /></button>
              <button type="button" aria-label="Formula"><Icon name="equals" /></button>
            </div>
            <Separator />
            <input
              type="text"
              aria-label="Input line"
              value={content}
              onChange={(e) => setContent(e.target.value)}
              className="flex-1 min-w-0 h-[23px] px-0.5 rounded-[4px] border border-[#a3a29f] bg-white outline-none"
            />
            <button
              type="button"
              aria-label="Expand formula bar"
              className="w-[18px] h-[23px] ml-1 rounded-[4px] border border-[#b8b7b4] bg-linear-to-b from-white to-[#eeedeb] flex items-center justify-center"
            >
              <Caret className="text-[#4c4c4c]" />
            </button>
          </div>

          <div className="flex flex-1 min-h-0">
            <div className="flex-1 min-w-0 overflow-hidden bg-white">
              <Sheet />
            </div>
            <div className="w-[7px] shrink-0 flex flex-col">
              <div className="h-[5px] bg-[#b3b2af] flex items-center justify-center">
                <span className="w-[5px] h-px bg-black" />
              </div>
              <div className="mt-[3px] h-[47%] bg-[#f29069]" />
            </div>
          </div>

          <div className="flex h-[7px] shrink-0 pl-px pr-[7px] justify-between">
            <div className="w-5/11 bg-[#f29069]" />
            <div className="w-[5px] bg-[#b3b2af] flex items-center justify-center">
              <span className="w-px h-[5px] bg-black" />
            </div>
          </div>

          <div className="flex h-5 shrink-0 items-start pl-3">
            <div className="flex gap-3 h-[19px] items-center">
              {TAB_NAV.map(([label, d]) => (
                <button key={label} type="button" aria-label={label}>
                  <svg viewBox="0 0 8 9" className="w-2 h-[9px]" aria-hidden="true">
                    <path d={d} fill="#3c3c3c" />
                  </svg>
                </button>
              ))}
            </div>
            <button type="button" aria-label="Add sheet" className="h-[19px] ml-4 mr-[10px]">
              <svg viewBox="0 0 12 12" className="w-3 h-3" aria-hidden="true">
                <path d="M4 0h4v4h4v4H8v4H4V8H0V4h4z" fill="#4c4c4c" />
              </svg>
            </button>
            <button type="button" className="h-5 px-2 bg-white border border-t-0 border-[#96958f] font-bold text-[12px] leading-[18px]">
              Import Bill of materials
            </button>
          </div>
        </div>

        <div className="w-2 shrink-0 mb-px flex flex-col border border-[#b0afac] bg-white">
          <div className="flex-1 mx-px bg-[#f2f1f0]" />
          <button type="button" aria-label="Show sidebar" className="h-[73px] -ml-px bg-[#929189] flex items-center justify-center">
            <svg viewBox="0 0 5 8" className="w-[5px] h-2" aria-hidden="true">
              <path d="M0 0l5 4-5 4z" fill="#fff" />
            </svg>
          </button>
          <div className="flex-1 mx-px bg-[#f2f1f0]" />
        </div>
      </div>

      <div role="search" className="flex items-center h-[39px] shrink-0">
        <Grip />
        <button type="button" aria-label="Close find bar" className="px-1.5"><Icon name="close" /></button>
        <Combo label="Find" placeholder="Find" value={search} onChange={(e) => setSearch(e.target.value)} className="w-[248px]" inputClass="pl-1.5" />
        <button type="button" aria-label="Find previous" disabled className="w-[33px] pl-[5px]"><Icon name="prev" /></button>
        <button type="button" aria-label="Find next" disabled className="w-[33px] pl-[5px]"><Icon name="next" /></button>
        <button type="button" disabled className="px-1 mr-1.5 text-[12px] text-[#8d8d8d]">Find All</button>
        <div className="flex items-center gap-1">
          <Check id="formatted" label="Formatted Display" />
          <Check id="match-case" label="Match Case" />
        </div>
        <Separator />
        <button type="button" aria-label="Find & Replace" className="w-[33px] pl-1"><Icon name="find" /></button>
        <Separator />
      </div>
    </div>
  );
}
